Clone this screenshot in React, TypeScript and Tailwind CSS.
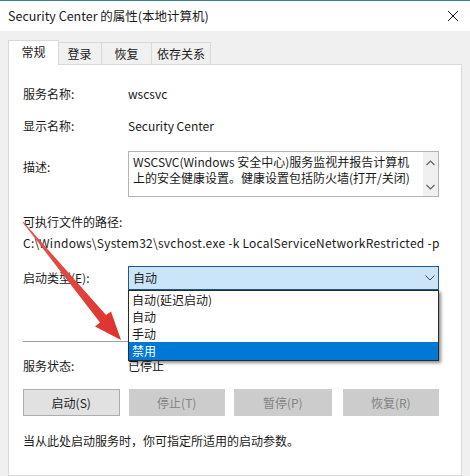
import React from "react";

function Chevron({ dir, className }: { dir: "up" | "down"; className?: string }) {
  return (
    <svg width="9" height="6" viewBox="0 0 9 6" className={className}>
      {dir === "up" ? (
        <path d="M0.5 5 L4.5 1 L8.5 5" fill="none" stroke="#606060" strokeWidth="1.2" />
      ) : (
        <path d="M0.5 1 L4.5 5 L8.5 1" fill="none" stroke="#606060" strokeWidth="1.2" />
      )}
    </svg>
  );
}

export default function App() {
  return (
    <div className="relative w-[470px] h-[476px] overflow-hidden bg-[#f0f0f0] text-[12px] leading-[16px] text-[#1a1a1a] font-['Noto_Sans_CJK_SC','Noto_Sans',sans-serif] flex flex-col">
      {/* top accent line */}
      <div className="h-[1px] bg-[#3b8088]" />
      {/* title bar */}
      <div className="h-[30px] bg-white flex items-center justify-between pl-[8px] pr-[11px]">
        <span className="text-[12.5px] mt-[-1px]">Security Center 的属性(本地计算机)</span>
        <svg width="12" height="12" viewBox="0 0 12 12">
          <path d="M1 1 L11 11 M11 1 L1 11" stroke="#111" strokeWidth="1" />
        </svg>
      </div>

      {/* tabs */}
      <div className="flex items-end pl-[8px] mt-[9px] relative z-10 -mb-px">
        <div className="h-[25px] w-[51px] bg-white border border-b-0 border-[#d9d9d9] flex items-start justify-center pt-[3px]">
          常规
        </div>
        <div className="h-[23px] w-[44px] -ml-px border border-[#d9d9d9] border-l-0 flex items-start justify-center pt-[3px]">
          登录
        </div>
        <div className="h-[23px] w-[50px] border border-l-0 border-[#d9d9d9] flex items-start justify-center pt-[3px]">
          恢复
        </div>
        <div className="h-[23px] w-[59px] border border-l-0 border-[#d9d9d9] flex items-start justify-center pt-[3px]">
          依存关系
        </div>
      </div>

      {/* panel */}
      <div className="ml-[8px] w-[454px] flex-1 bg-white border border-[#d9d9d9] pl-[14px] pr-[22px] pt-[19px] flex flex-col">
        <div className="flex items-center h-[20px]">
          <span className="w-[105px]">服务名称:</span>
          <span>wscsvc</span>
        </div>
        <div className="flex items-center h-[20px] mt-[12px]">
          <span className="w-[105px]">显示名称:</span>
          <span>Security Center</span>
        </div>
        <div className="flex items-start mt-[15px]">
          <span className="w-[105px] mt-[8px]">描述:</span>
          <div className="w-[311px] h-[46px] border border-[#b4b4b4] flex">
            <div className="flex-1 pl-[4px] pt-[2px] whitespace-nowrap">
              <div>WSCSVC(Windows 安全中心)服务监视并报告计算机</div>
              <div>上的安全健康设置。健康设置包括防火墙(打开/关闭)</div>
            </div>
            <div className="w-[15px] bg-[#f0f0f0] flex flex-col items-center justify-between pt-[8px] pb-[6px]">
              <Chevron dir="up" />
              <Chevron dir="down" />
            </div>
          </div>
        </div>
        <div className="mt-[17px]">可执行文件的路径:</div>
        <div className="mt-[5px] whitespace-nowrap tracking-[0.25px]">C:\Windows\System32\svchost.exe -k LocalServiceNetworkRestricted -p</div>
        <div className="flex items-center mt-[15px]">
          <span className="w-[105px]">启动类型(E):</span>
          <div className="w-[311px] h-[24px] bg-[#cce4f7] border border-[#1c5a8c] flex items-center justify-between pl-[4px] pr-[3px]">
            <span>自动</span>
            <svg width="10" height="6" viewBox="0 0 10 6">
              <path d="M0.5 0.5 L5 5 L9.5 0.5" fill="none" stroke="#444" strokeWidth="1" />
            </svg>
          </div>
        </div>
        <div className="mt-[51px] h-px bg-[#a0a0a0]" />
        <div className="flex items-center h-[20px] mt-[14px]">
          <span className="w-[105px]">服务状态:</span>
          <span>已停止</span>
        </div>
        <div className="flex mt-[13px] gap-[9px]">
          <button className="w-[97px] h-[27px] bg-[#e1e1e1] border border-[#adadad] text-[#1a1a1a]">启动(S)</button>
          <button className="w-[97px] h-[27px] bg-[#cccccc] border border-[#cccccc] text-[#838383]">停止(T)</button>
          <button className="w-[98px] h-[27px] bg-[#cccccc] border border-[#cccccc] text-[#838383]">暂停(P)</button>
          <button className="w-[97px] h-[27px] ml-[2px] bg-[#cccccc] border border-[#cccccc] text-[#838383]">恢复(R)</button>
        </div>
        <div className="mt-[17px]">当从此处启动服务时，你可指定所适用的启动参数。</div>
      </div>

      {/* dropdown list overlay */}
      <div className="absolute left-[128px] top-[290px] w-[311px] bg-white border border-[#2a2a2a] shadow-[2px_2px_3px_rgba(0,0,0,0.45)] flex flex-col">
        <div className="h-[17px] pl-[3px] flex items-center">自动(延迟启动)</div>
        <div className="h-[17px] pl-[3px] flex items-center">自动</div>
        <div className="h-[17px] pl-[3px] flex items-center">手动</div>
        <div className="h-[18px] pl-[3px] flex items-center bg-[#0078d7] text-white">禁用</div>
      </div>

      {/* red annotation arrow */}
      <svg className="absolute left-0 top-0 pointer-events-none" width="470" height="476" viewBox="0 0 470 476">
        <defs>
          <linearGradient id="ar" x1="0" y1="0" x2="1" y2="1">
            <stop offset="0" stopColor="#e05a50" />
            <stop offset="1" stopColor="#e0302e" />
          </linearGradient>
        </defs>
        <polygon
          points="22.6,222.3 23.4,221.7 106,315 111,311.5 121,340 95,326.5 100,322.5"
          fill="url(#ar)"
        />
      </svg>
    </div>
  );
}
